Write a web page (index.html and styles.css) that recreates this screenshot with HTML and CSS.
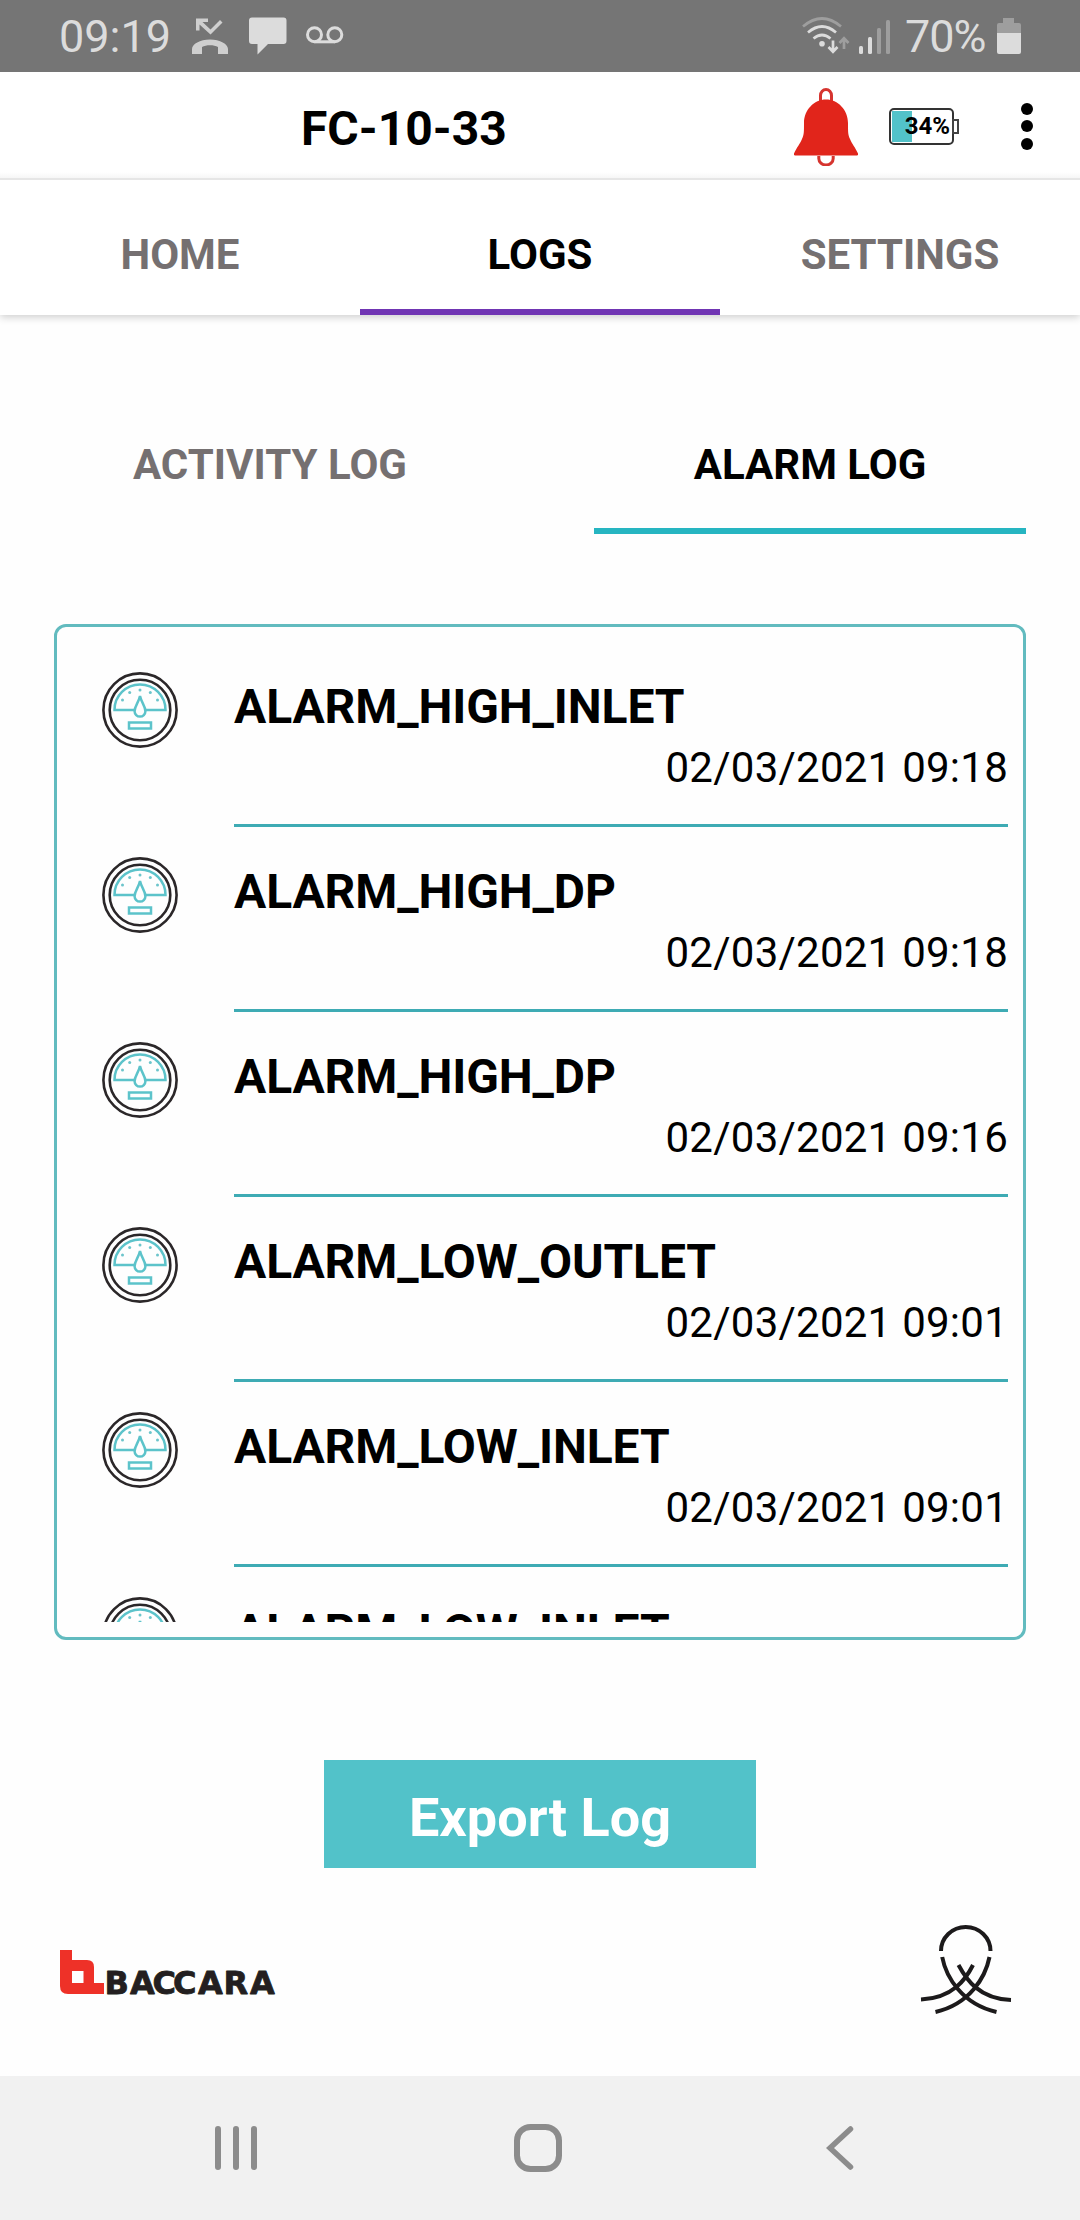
FILE: index.html
```html
<!DOCTYPE html>
<html lang="en">
<head>
    <meta charset="UTF-8">
    <meta name="viewport" content="width=device-width, initial-scale=1.0">
    <title>FC-10-33 - Alarm Log</title>
    <link rel="stylesheet" href="styles.css">
</head>
<body>

    <!-- Gauge icon shared by all log rows -->
    <svg class="sprite" width="0" height="0">
        <symbol id="gauge" viewBox="0 0 76 76">
            <g fill="none" stroke="#2b2729" stroke-width="2.6">
                <circle cx="38" cy="38" r="36.6"/>
                <circle cx="38" cy="38" r="30.3"/>
            </g>
            <g fill="none" stroke="#5cc3ca" stroke-width="2.5">
                <path d="M32.5 38H12.5a25.5 25.5 0 0 1 51 0H43.5"/>
                <path d="M38 24C36.5 31 32.6 34 32.6 39.2a5.4 5.4 0 0 0 10.8 0C43.4 34 39.5 31 38 24Z"/>
                <path d="M27 50.5h22v6H27z"/>
            </g>
            <g fill="#6cc5cb">
                <circle cx="38" cy="18" r="1.5"/>
                <circle cx="27.7" cy="20.5" r="1.5"/>
                <circle cx="48.3" cy="20.5" r="1.5"/>
                <circle cx="20.5" cy="28" r="1.5"/>
                <circle cx="55.5" cy="28" r="1.5"/>
            </g>
        </symbol>
    </svg>

    <div class="status-bar">
        <span class="status-time">09:19</span>
        <svg class="icon-missed" width="36" height="36" viewBox="0 0 36 36">
            <path d="M4 0.5H16V4H10.5L18.5 11.5L28 2L30.5 4.5L18.5 16.5L7.5 6.5V12.5H4Z" fill="#cfcfcf"/>
            <path d="M0 31C0 26 8 21.5 18 21.5S36 26 36 31V36H26V29C22 26.6 14 26.6 10 29V36H0Z" fill="#cfcfcf"/>
        </svg>
        <svg class="icon-chat" width="38" height="38" viewBox="0 0 38 38">
            <path d="M3 0.5H34.5Q37.5 0.5 37.5 3.5V24Q37.5 27 34.5 27H19L8.5 37.5V27H3Q0 27 0 24V3.5Q0 0.5 3 0.5Z" fill="#dcdcdc"/>
        </svg>
        <svg class="icon-voicemail" width="38" height="18" viewBox="0 0 38 18">
            <g fill="none" stroke="#dcdcdc" stroke-width="3">
                <circle cx="8.5" cy="8.7" r="7"/>
                <circle cx="28.8" cy="8.7" r="7"/>
                <path d="M8.5 15.8H28.8"/>
            </g>
        </svg>
        <div class="status-right">
            <svg width="48" height="38" viewBox="0 0 48 38">
                <g fill="none" stroke="#dcdcdc" stroke-width="2.7">
                    <path d="M1 9.5Q20 -6.5 39 9.5" stroke="#9e9e9e"/>
                    <path d="M6 15.5Q20 3.5 34 15.5"/>
                    <path d="M11.5 21.5Q20 14.5 28.5 21.5"/>
                    <path d="M31 23.5V34M26.5 30L31 34.7L35.5 30"/>
                    <path d="M42 32V22M37.5 26L42 21.3L46.5 26" stroke="#9e9e9e"/>
                </g>
                <circle cx="20" cy="26.8" r="2.8" fill="#dcdcdc"/>
            </svg>
            <svg class="icon-signal" width="31" height="36" viewBox="0 0 31 36">
                <g fill="#dcdcdc">
                    <rect x="0" y="28" width="4" height="8" rx="1.5"/>
                    <rect x="9" y="19" width="4" height="17" rx="1.5"/>
                </g>
                <g fill="#9e9e9e">
                    <rect x="18" y="10" width="4" height="26" rx="1.5"/>
                    <rect x="27" y="2" width="4" height="34" rx="1.5"/>
                </g>
            </svg>
            <span class="status-percent">70%</span>
            <svg class="icon-phone-battery" width="24" height="36" viewBox="0 0 24 36">
                <path d="M6 0H17V5H22Q24 5 24 7V15H0V7Q0 5 2 5H6Z" fill="#9e9e9e"/>
                <path d="M0 15H24V34Q24 36 22 36H2Q0 36 0 34Z" fill="#dcdcdc"/>
            </svg>
        </div>
    </div>

    <div class="header">
        <h1 class="device-name">FC-10-33</h1>
        <svg class="icon-bell" width="66" height="78" viewBox="0 0 66 78">
            <g fill="none" stroke="#d6342f" stroke-width="3">
                <path d="M27.5 14V7.5a5.5 6 0 0 1 11 0V14"/>
                <path d="M25.8 68V70.5a7.2 6.5 0 0 0 14.4 0V68"/>
            </g>
            <path d="M33 11.5C45 11.5 55 22 55 35C55 44 55 47 57 51C59 56 62 59 65 65.5Q65.5 67.5 64 67.5H2Q0.5 67.5 1 65.5C4 59 7 56 9 51C11 47 11 44 11 35C11 22 21 11.5 33 11.5Z" fill="#e1251b"/>
        </svg>
        <div class="battery">
            <div class="battery-level" style="width: 34%"></div>
            <span class="battery-text">34%</span>
        </div>
        <div class="menu-dots">
            <i></i><i></i><i></i>
        </div>
    </div>

    <div class="tabs">
        <div class="tab">HOME</div>
        <div class="tab active">LOGS</div>
        <div class="tab">SETTINGS</div>
    </div>

    <div class="log-tabs">
        <div class="log-tab">ACTIVITY LOG</div>
        <div class="log-tab active">ALARM LOG</div>
    </div>

    <div class="log-container">
        <div class="log-list">
            <div class="log-row">
                <svg class="log-icon"><use href="#gauge"/></svg>
                <div class="log-body">
                    <div class="log-name">ALARM_HIGH_INLET</div>
                    <div class="log-date">02/03/2021 09:18</div>
                </div>
            </div>
            <div class="log-row">
                <svg class="log-icon"><use href="#gauge"/></svg>
                <div class="log-body">
                    <div class="log-name">ALARM_HIGH_DP</div>
                    <div class="log-date">02/03/2021 09:18</div>
                </div>
            </div>
            <div class="log-row">
                <svg class="log-icon"><use href="#gauge"/></svg>
                <div class="log-body">
                    <div class="log-name">ALARM_HIGH_DP</div>
                    <div class="log-date">02/03/2021 09:16</div>
                </div>
            </div>
            <div class="log-row">
                <svg class="log-icon"><use href="#gauge"/></svg>
                <div class="log-body">
                    <div class="log-name">ALARM_LOW_OUTLET</div>
                    <div class="log-date">02/03/2021 09:01</div>
                </div>
            </div>
            <div class="log-row">
                <svg class="log-icon"><use href="#gauge"/></svg>
                <div class="log-body">
                    <div class="log-name">ALARM_LOW_INLET</div>
                    <div class="log-date">02/03/2021 09:01</div>
                </div>
            </div>
            <div class="log-row">
                <svg class="log-icon"><use href="#gauge"/></svg>
                <div class="log-body">
                    <div class="log-name">ALARM_LOW_INLET</div>
                </div>
            </div>
        </div>
    </div>

    <button class="export-button">Export Log</button>

    <div class="footer">
        <svg width="220" height="56" viewBox="0 0 220 56">
            <path fill-rule="evenodd" d="M0 0H12V10H27Q34 10 34 17V33H44V44H8Q0 44 0 36ZM12 21V33H23.5V21Z" fill="#ee3128"/>
            <text class="brand" x="44.5 70 92.5 113 138 163.5 190" y="43.5">BACCARA</text>
        </svg>
        <svg class="emblem" width="90" height="90" viewBox="0 0 90 90">
            <g fill="none" stroke="#1c1a1b" stroke-width="4">
                <path d="M20 26a24.7 24 0 0 1 49.5 0"/>
                <path d="M21.2 32C25 52 41 79 75.5 87"/>
                <path d="M68.5 32C64.5 52 49 79 14.5 87"/>
                <path d="M37.5 40C45 54 58 74 90 75"/>
                <path d="M52 40C45 54 32 73 0 74.5"/>
            </g>
        </svg>
    </div>

    <div class="nav-bar">
        <svg width="42" height="46" viewBox="0 0 42 46">
            <path d="M3 4V42M21 4V42M39 4V42" stroke="#8c8c8c" stroke-width="6" stroke-linecap="round"/>
        </svg>
        <svg class="nav-home" width="48" height="48" viewBox="0 0 48 48">
            <rect x="3" y="3" width="42" height="42" rx="13.5" fill="none" stroke="#8c8c8c" stroke-width="6"/>
        </svg>
        <svg width="28" height="46" viewBox="0 0 28 46">
            <path d="M24.5 4L4 23L24.5 42" fill="none" stroke="#8c8c8c" stroke-width="5.5" stroke-linecap="round"/>
        </svg>
    </div>

</body>
</html>
```
FILE: styles.css
```css
/* General Page Styles */
body {
    font-family: Roboto, sans-serif;
    background-color: #fefefe;
    color: #000;
    margin: 0;
    height: 2220px;
    display: flex;
    flex-direction: column;
    overflow: hidden;
}

svg {
    display: block;
    flex: none;
}

.sprite {
    position: absolute;
}

/* Phone Status Bar */
.status-bar {
    height: 72px;
    box-sizing: border-box;
    background-color: #757575;
    color: #dcdcdc;
    display: flex;
    align-items: center;
    padding: 0 59px 0 59px;
    font-size: 45px;
}

.status-time {
    width: 133px;
}

.icon-chat {
    margin-left: 21px;
}

.icon-voicemail {
    margin-left: 19px;
    margin-bottom: 2px;
}

.status-right {
    display: flex;
    align-items: center;
    margin-left: auto;
}

.icon-signal {
    margin-left: 9px;
}

.status-percent {
    width: 92px;
    margin-left: 15px;
    letter-spacing: -1px;
}

/* Header */
.header {
    height: 108px;
    box-sizing: border-box;
    background: linear-gradient(#fff 100px, #f6f6f6 106px);
    border-bottom: 2px solid #e6e6e6;
    display: flex;
    align-items: center;
    padding-left: 301px;
}

.device-name {
    font-size: 48px;
    font-weight: bold;
    width: 492px;
    margin: 7px 0 0;
}

.icon-bell {
    margin-top: 3px;
}

/* Controller battery */
.battery {
    position: relative;
    width: 65px;
    height: 37px;
    box-sizing: border-box;
    border: 2px solid #333;
    border-radius: 5px;
    margin-left: 30px;
    margin-top: 2px;
    padding: 1px;
    display: flex;
}

.battery::after {
    content: "";
    position: absolute;
    left: 61px;
    top: 9px;
    width: 3px;
    height: 11px;
    border: 2px solid #444;
}

.battery-level {
    background-color: #52c2c9;
}

.battery-text {
    position: absolute;
    right: 2px;
    top: 2px;
    font-size: 24px;
    line-height: 29px;
    font-weight: bold;
}

.menu-dots {
    display: flex;
    flex-direction: column;
    gap: 5.5px;
    margin-left: 67px;
    margin-top: 2px;
}

.menu-dots i {
    width: 12px;
    height: 12px;
    border-radius: 50%;
    background-color: #000;
}

/* Main Tabs */
.tabs {
    display: flex;
    height: 135px;
    background-color: #fff;
    box-shadow: 0 2px 8px rgba(0, 0, 0, 0.2);
    clip-path: inset(0 0 -20px 0);
}

.tab {
    flex: 1;
    padding-top: 20px;
    border-bottom: 6px solid transparent;
    line-height: 109px;
    text-align: center;
    font-size: 42px;
    font-weight: bold;
    color: #757071;
}

.tab.active {
    color: #000;
    border-bottom-color: #7035b3;
}

/* Activity / Alarm Tabs */
.log-tabs {
    display: flex;
    gap: 108px;
    margin: 87px 54px 0;
}

.log-tab {
    flex: 1;
    line-height: 126px;
    border-bottom: 6px solid transparent;
    text-align: center;
    font-size: 42px;
    font-weight: bold;
    color: #757071;
}

.log-tab.active {
    color: #000;
    border-bottom-color: #26b5c1;
}

/* Log List */
.log-container {
    height: 1016px;
    box-sizing: border-box;
    margin: 90px 54px 0;
    padding: 15px;
    border: 3px solid #62bbbf;
    border-radius: 12px;
}

.log-list {
    height: 100%;
    overflow: hidden;
}

.log-row {
    display: flex;
    height: 185px;
}

.log-icon {
    width: 76px;
    height: 76px;
    margin: 30px 56px 0 30px;
}

.log-body {
    flex: 1;
    padding-top: 37px;
    border-bottom: 3px solid #3eabb4;
}

.log-name {
    font-size: 48px;
    line-height: 56px;
    font-weight: bold;
    letter-spacing: -0.1px;
}

.log-date {
    margin-top: 8px;
    font-size: 42px;
    line-height: 50px;
    text-align: right;
    letter-spacing: 0.25px;
}

/* Export Button */
.export-button {
    width: 432px;
    height: 108px;
    margin: 120px auto 0;
    padding: 6px 0 0;
    border: none;
    background-color: #52c2c9;
    color: #fff;
    font-family: inherit;
    font-size: 54px;
    font-weight: bold;
}

/* Footer Logos */
.footer {
    display: flex;
    justify-content: space-between;
    align-items: flex-start;
    height: 126px;
    padding: 82px 69px 0 60px;
}

.brand {
    font-family: "DejaVu Sans", sans-serif;
    font-size: 32px;
    font-weight: bold;
    fill: #231f20;
    stroke: #231f20;
    stroke-width: 0.8px;
    stroke-linejoin: round;
}

.emblem {
    margin-top: -25px;
    overflow: visible;
}

/* Phone Navigation Bar */
.nav-bar {
    display: flex;
    justify-content: space-between;
    align-items: center;
    height: 144px;
    box-sizing: border-box;
    background-color: #f1f1f1;
    padding: 0 226px 0 215px;
}

.nav-home {
    margin-right: 7px;
}
```
